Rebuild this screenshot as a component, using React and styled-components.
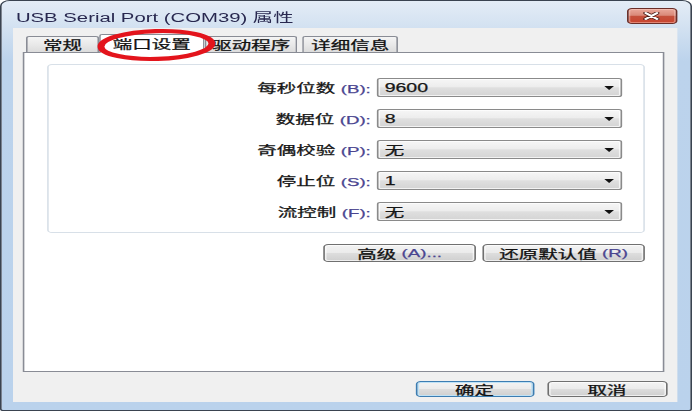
import React from 'react';
import styled, { createGlobalStyle } from 'styled-components';

// the reference is a Win7 dialog stretched sideways, so the dialog is
// laid out at its native width and scaled on x to fill 692px
const NATIVE_W = 426;
const STRETCH = 692 / NATIVE_W;

const GlobalStyle = createGlobalStyle`
html, body {
  margin: 0;
  padding: 0;
  background: #ffffff;
  overflow: hidden;
}
`;

const Viewport = styled.div`
  position: relative;
  width: 692px;
  height: 411px;
  overflow: hidden;
`;

const Dialog = styled.div`
  position: relative;
  box-sizing: border-box;
  width: ${NATIVE_W}px;
  height: 411px;
  transform: scaleX(${STRETCH});
  transform-origin: 0 0;
  border: 1px solid #3a4350;
  border-radius: 6px 6px 2px 2px;
  background: linear-gradient(#e4ecf6 0, #d2e1f1 27px, #bcd3ec 60px, #bad2ec 100%);
  display: flex;
  flex-direction: column;
  font-family: "Liberation Sans", "Noto Sans CJK SC", sans-serif;
  color: #161616;
  -webkit-text-stroke: 0.25px currentColor;
`;

const TitleBar = styled.div`
  box-sizing: border-box;
  height: 27px;
  display: flex;
  align-items: center;
  justify-content: space-between;
  padding: 3px 8px 0 8.8px;
`;

const Title = styled.span`
  font-size: 12.5px;
  color: #28284f;
  white-space: nowrap;
  -webkit-text-stroke: 0;
`;

const CloseButton = styled.div`
  box-sizing: border-box;
  width: 31.4px;
  height: 16px;
  border: 1px solid #6a2e28;
  border-radius: 3px;
  background: linear-gradient(#eaa89b 0%, #da8979 45%, #c5503c 52%, #c9452f 100%);
  box-shadow: inset 0 0 0 1px rgba(255, 210, 200, 0.45);
  display: flex;
  align-items: center;
  justify-content: center;
`;

const Body = styled.div`
  box-sizing: border-box;
  height: 374px;
  margin: 0 8.4px 0 7px;
  padding-top: 6px;
  background: #f0f0f0;
  display: flex;
  flex-direction: column;
`;

const TabStrip = styled.div`
  position: relative;
  z-index: 1;
  height: 18px;
  display: flex;
  align-items: flex-end;
  padding-left: 8px;
`;

const Tab = styled.div`
  box-sizing: border-box;
  width: ${p => p.$w}px;
  height: ${p => (p.$active ? 19 : 16)}px;
  margin-bottom: ${p => (p.$active ? -1 : 0)}px;
  margin-left: ${p => p.$gap || 0}px;
  border: 1px solid #898c95;
  border-bottom: none;
  border-radius: 2px 2px 0 0;
  background: ${p => (p.$active ? '#ffffff' : 'linear-gradient(#f4f4f4, #e9e9e9 50%, #dcdcdc)')};
  font-size: 12px;
  color: #111;
  display: flex;
  align-items: center;
  justify-content: center;
  padding-bottom: ${p => (p.$active ? 2 : 0)}px;
  white-space: nowrap;
`;

const Panel = styled.div`
  box-sizing: border-box;
  width: 395px;
  height: 320px;
  margin-left: 6px;
  border: 1px solid #898c95;
  background: #ffffff;
  padding: 11px 0 0 14.4px;
`;

const Form = styled.div`
  width: 367.4px;
  display: flex;
  flex-direction: column;
`;

const GroupBox = styled.div`
  box-sizing: border-box;
  height: 169px;
  border: 1px solid #d8e0e8;
  border-radius: 3px;
  padding: 13px 12.5px 11px 0;
  display: grid;
  grid-template-columns: 1fr 151px;
  grid-auto-rows: 19px;
  column-gap: 4px;
  row-gap: 12px;
  align-items: center;
`;

const Label = styled.label`
  text-align: right;
  font-size: 12px;
  white-space: nowrap;
`;

const Key = styled.span`
  color: #4a4590;
  font-size: 11.5px;
`;

const Combo = styled.div`
  box-sizing: border-box;
  height: 19px;
  border: 1px solid #8a8a8a;
  border-radius: 2px;
  background: linear-gradient(#f6f6f6, #ededed 45%, #dfdfdf 52%, #d4d4d4);
  box-shadow: inset 0 0 0 1px rgba(255, 255, 255, 0.7);
  display: flex;
  align-items: center;
  justify-content: space-between;
  padding: 0 4px 0 3.5px;
  font-size: 12px;
`;

const Arrow = styled.span`
  width: 0;
  height: 0;
  border-left: 3.5px solid transparent;
  border-right: 3.5px solid transparent;
  border-top: 4px solid #111;
`;

const ActionRow = styled.div`
  display: flex;
  justify-content: flex-end;
  gap: 3.7px;
  margin-top: 11px;
`;

const Button = styled.div`
  box-sizing: border-box;
  width: ${p => p.$w}px;
  height: ${p => p.$h}px;
  border: 1px solid ${p => (p.$primary ? '#3c7db2' : '#707070')};
  border-radius: 3px;
  background: linear-gradient(#f3f3f3, #ebebeb 48%, #dddddd 52%, #cfcfcf);
  box-shadow: inset 0 0 0 1px ${p => (p.$primary ? '#bfe2f6' : 'rgba(255, 255, 255, 0.65)')};
  font-size: 12px;
  color: #111;
  display: flex;
  align-items: center;
  justify-content: center;
  white-space: nowrap;
`;

const Footer = styled.div`
  display: flex;
  justify-content: flex-end;
  gap: 8px;
  margin-top: 9px;
  padding-right: 6.1px;
`;

const Marker = styled.svg`
  position: absolute;
  left: 58.7px;
  top: 27.5px;
  width: 72.6px;
  height: 32px;
  overflow: visible;
  z-index: 2;
`;

const settings = [
  { label: '每秒位数', key: 'B', value: '9600' },
  { label: '数据位', key: 'D', value: '8' },
  { label: '奇偶校验', key: 'P', value: '无' },
  { label: '停止位', key: 'S', value: '1' },
  { label: '流控制', key: 'F', value: '无' },
];

export default function App() {
  return (
    <Viewport>
      <GlobalStyle />
      <Dialog>
        <TitleBar>
          <Title>USB Serial Port (COM39) 属性</Title>
          <CloseButton>
            <svg width="10" height="8" viewBox="0 0 10 8">
              <path d="M1.5 1 L8.5 7 M8.5 1 L1.5 7" stroke="#4a1d18" strokeWidth="3.2" strokeLinecap="round" />
              <path d="M1.5 1 L8.5 7 M8.5 1 L1.5 7" stroke="#ffffff" strokeWidth="1.7" strokeLinecap="round" />
            </svg>
          </CloseButton>
        </TitleBar>

        <Body>
          <TabStrip>
            <Tab $w={45}>常规</Tab>
            <Tab $w={65} $active>端口设置</Tab>
            <Tab $w={57.4}>驱动程序</Tab>
            <Tab $w={58.5} $gap={3}>详细信息</Tab>
          </TabStrip>

          <Panel>
            <Form>
              <GroupBox>
                {settings.map(s => (
                  <React.Fragment key={s.key}>
                    <Label>
                      {s.label} <Key>({s.key}):</Key>
                    </Label>
                    <Combo>
                      <span>{s.value}</span>
                      <Arrow />
                    </Combo>
                  </React.Fragment>
                ))}
              </GroupBox>
              <ActionRow>
                <Button $w={94.7} $h={18}>高级 <Key>&nbsp;(A)...</Key></Button>
                <Button $w={99.7} $h={18}>还原默认值 <Key>&nbsp;(R)</Key></Button>
              </ActionRow>
            </Form>
          </Panel>

          <Footer>
            <Button $w={73.2} $h={16} $primary>确定</Button>
            <Button $w={73.8} $h={16}>取消</Button>
          </Footer>
        </Body>

        <Marker viewBox="0 0 72.6 32" preserveAspectRatio="none">
          <ellipse
            cx="36.3"
            cy="16"
            rx="34.2"
            ry="13.9"
            fill="none"
            stroke="#e3141c"
            strokeWidth="4.2"
            transform="rotate(-3 36.3 16)"
          />
        </Marker>
      </Dialog>
    </Viewport>
  );
}
